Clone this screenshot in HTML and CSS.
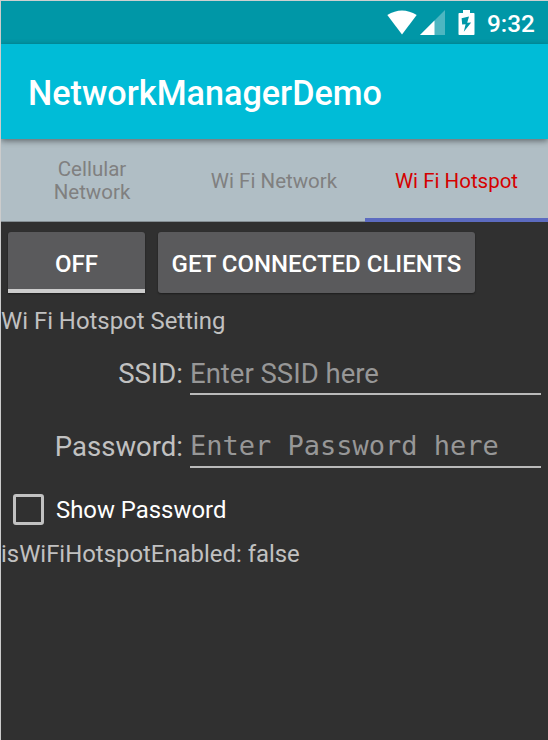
FILE: index.html
```
<!DOCTYPE html>
<html lang="en">
<head>
<meta charset="utf-8">
<title>NetworkManagerDemo</title>
<link rel="stylesheet" href="styles.css">
</head>
<body>
<div class="screen">
  <div class="status-bar">
    <svg class="wifi" width="30" height="25" viewBox="0 0 30 25"><path d="M0.3 5Q15-4.2 29.7 5L15 24.5Z" fill="#fff"/></svg>
    <svg class="signal" width="25" height="25" viewBox="0 0 25 25"><path d="M0 25L25 0V25Z" fill="#fff" fill-opacity=".3"/><path d="M0 25L14.5 10.5V25Z" fill="#fff"/></svg>
    <svg class="battery" width="17" height="25" viewBox="0 0 17 25"><path fill="#fff" fill-rule="evenodd" d="M5 0H12V3H15.7Q16.5 3 16.5 3.8V24.2Q16.5 25 15.7 25H1.3Q.5 25 .5 24.2V3.8Q.5 3 1.3 3H5ZM11 6.5L3.6 8.2L4.2 14.6L7.6 14.2L5.8 21.8L13.2 12.4L9.2 12.8Z"/></svg>
    <span class="clock">9:32</span>
  </div>
  <header class="app-bar"><h1 class="title">NetworkManagerDemo</h1></header>
  <nav class="tabs">
    <div class="tab"><span class="tab-label">Cellular<br>Network</span></div>
    <div class="tab"><span class="tab-label">Wi Fi Network</span></div>
    <div class="tab active"><span class="tab-label">Wi Fi Hotspot</span></div>
  </nav>
  <main class="content">
    <div class="buttons">
      <button class="btn toggle">OFF</button>
      <button class="btn clients">GET CONNECTED CLIENTS</button>
    </div>
    <div class="note setting">Wi Fi Hotspot Setting</div>
    <div class="field">
      <span class="field-label">SSID:</span>
      <span class="field-input"><span class="hint">Enter SSID here</span></span>
    </div>
    <div class="field second">
      <span class="field-label">Password:</span>
      <span class="field-input"><span class="hint mono">Enter Password here</span></span>
    </div>
    <div class="check-row">
      <span class="checkbox"></span>
      <span class="check-label">Show Password</span>
    </div>
    <div class="note state">isWiFiHotspotEnabled: false</div>
  </main>
</div>
</body>
</html>
```
FILE: styles.css
```
* { box-sizing: border-box; }
body { margin: 0; font-family: Roboto, "Liberation Sans", sans-serif; background: #303030; }
span, h1, button, .note { white-space: nowrap; }
.screen {
  width: 548px; height: 740px; overflow: hidden;
  border-top: 1px solid #ccd0d0; border-left: 1px solid #ccc;
  background: #303030;
}
.status-bar {
  height: 43px; background: #0097a7; color: #fff;
  display: flex; justify-content: flex-end; align-items: flex-start;
  padding: 9px 14px 0 0;
}
.wifi { margin-right: 3px; }
.signal { margin-right: 13px; }
.battery { margin-right: 12px; }
.clock { width: 47px; font-size: 24.3px; line-height: 28px; font-weight: 500; }
.app-bar {
  height: 95px; background: #00bcd7; padding: 29px 0 0 27px;
  position: relative; box-shadow: 0 2px 6px rgba(0,0,0,.45);
}
.title { margin: 0; color: #fff; font-size: 34.2px; line-height: 40px; font-weight: 500; }
.tabs {
  height: 83px; display: grid; grid-template-columns: 182px 182px 183px;
  background: #b0bec5;
}
.tab {
  display: flex; align-items: center; justify-content: center; text-align: center;
  font-size: 20.5px; line-height: 23px; color: #808080;
  border-bottom: 1px solid #858e93; padding-top: 2px;
}
.tab.active { color: #d50000; border-bottom: 4px solid #5c6bc0; padding-top: 5px; }
.content { display: flex; flex-direction: column; }
.buttons { display: flex; gap: 13px; padding: 10px 0 0 7px; }
.btn {
  height: 61px; border: 0; border-radius: 3px; padding: 0; background: #5a5a5c; color: #fff;
  font: 500 24px/28px Roboto, sans-serif; box-shadow: 0 1px 2px rgba(0,0,0,.4);
}
.toggle { width: 137px; border-bottom: 4px solid #ccc; border-radius: 3px 3px 0 0; padding-top: 6px; }
.clients { width: 317px; padding-top: 2px; }
.note { color: #c1c1c1; font-size: 23.9px; line-height: 28px; }
.setting { margin-top: 14px; }
.field { display: flex; gap: 7px; height: 45px; margin-top: 15px; }
.field.second { margin-top: 28px; }
.field-label { width: 182px; text-align: right; font-size: 27.5px; line-height: 48px; color: #c1c1c1; }
.field-input { width: 351px; border-bottom: 2px solid #bababa; }
.hint { display: block; font-size: 27.5px; line-height: 47px; color: #979797; }
.mono { font-family: "DejaVu Sans Mono", monospace; font-size: 27px; line-height: 45px; }
.check-row { display: flex; align-items: center; gap: 12px; margin: 25px 0 0 12px; height: 32px; }
.checkbox { width: 31px; height: 31px; border: 3px solid #c1c1c1; border-radius: 3px; }
.check-label { font-size: 23.9px; line-height: 32px; color: #fff; padding-top: 2px; }
.state { margin-top: 15px; }
```
